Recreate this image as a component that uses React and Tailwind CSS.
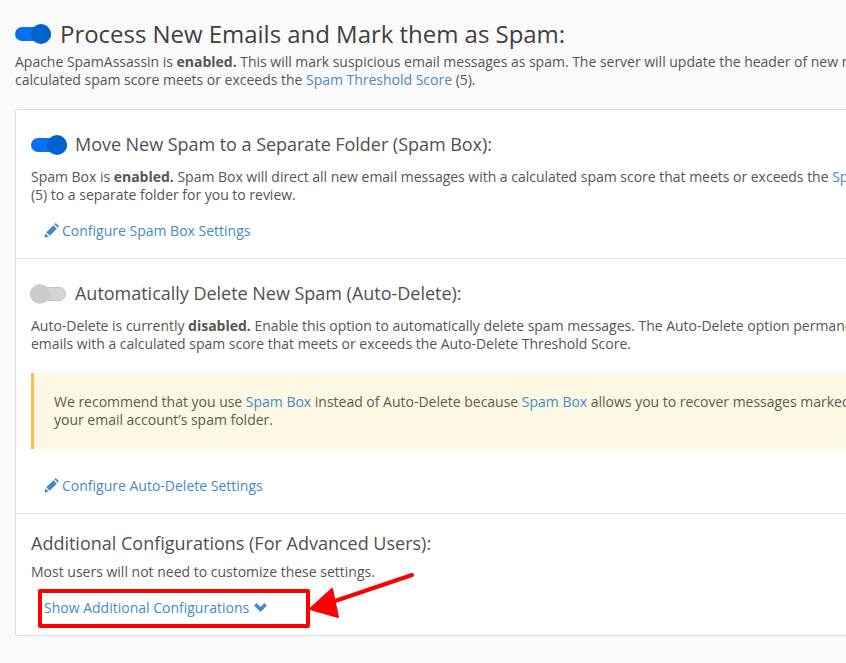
const Toggle = ({ on }) => (
  <span className={`relative inline-block h-[14px] w-[36px] shrink-0 rounded-full ${on ? 'bg-[#0a6ff5]' : '-ml-px mr-px bg-[#d4d4d4] border border-[#c4c4c4]'}`}>
    <span className={`absolute top-1/2 h-[20px] w-[20px] -translate-y-1/2 rounded-full ${on ? 'right-0 bg-[#0062cc]' : '-left-px bg-[#cccccc]'}`} />
  </span>
);

const PencilIcon = () => (
  <svg viewBox="0 0 16 16" className="-mt-[2px] h-[15px] w-[15px] shrink-0 fill-[#428bca]">
    <path d="M0.5 15.5l.9-4.6 3.7 3.7-4.6.9zM2.4 9.9l7.6-7.6 3.7 3.7-7.6 7.6-3.7-3.7zM11 1.3l.7-.7c.4-.4 1-.4 1.4 0l2.3 2.3c.4.4.4 1 0 1.4l-.7.7L11 1.3z" />
  </svg>
);

const ChevronIcon = () => (
  <svg viewBox="0 0 14 11" className="-mt-[3px] h-[10px] w-[13px] shrink-0 fill-[#428bca]">
    <path d="M0.4 3.4L2.2 1.6c.3-.3.7-.3 1 0L7 5.4l3.8-3.8c.3-.3.7-.3 1 0l1.8 1.8c.3.3.3.7 0 1L7.5 10.4c-.3.3-.7.3-1 0L.4 4.4c-.3-.3-.3-.7 0-1z" />
  </svg>
);

const Link = ({ children }) => <a href="#" className="text-[#428bca]">{children}</a>;

const ActionLink = ({ children }) => (
  <a href="#" className="flex h-[20px] items-center gap-[3px] pl-[13px] text-[#428bca]">
    <PencilIcon />
    {children}
  </a>
);

const App = () => {
  return (
    <div className="h-[663px] w-[846px] overflow-hidden bg-[#fafafa] font-['Open_Sans',sans-serif] text-[14px] leading-[18px] text-[#555555]">
      <div className="relative w-[1100px] pl-[15px] pt-[16px]">
        <div className="flex h-[36px] items-center gap-[9px]">
          <Toggle on />
          <h1 className="text-[24px] font-normal leading-[36px] tracking-[-0.03px] text-[#404040]">Process New Emails and Mark them as Spam:</h1>
        </div>
        <p className="mt-[1px] whitespace-nowrap tracking-[-0.015px]">
          Apache SpamAssassin is <b>enabled.</b> This will mark suspicious email messages as spam. The server will update the header of new messages with a
          <br />
          calculated spam score meets or exceeds the <Link>Spam Threshold Score</Link> (5).
        </p>

        <div className="mt-[20px] rounded-[2px] border border-[#e0e0e0] bg-white">
          <section className="h-[149px] border-b border-[#e0e0e0] px-[15px] pt-[21px]">
            <div className="flex h-[27px] items-center gap-[8px]">
              <Toggle on />
              <h2 className="text-[18px] font-normal leading-[27px] tracking-[-0.04px] text-[#505050]">Move New Spam to a Separate Folder (Spam Box):</h2>
            </div>
            <p className="mt-[10px] whitespace-nowrap tracking-[-0.015px]">
              Spam Box is <b>enabled.</b> Spam Box will direct all new email messages with a calculated spam score that meets or exceeds the <Link>Spam Threshold Score</Link>
              <br />
              (5) to a separate folder for you to review.
            </p>
            <div className="mt-[17px]"><ActionLink>Configure Spam Box Settings</ActionLink></div>
          </section>

          <section className="h-[255px] border-b border-[#e0e0e0] px-[15px] pt-[21px]">
            <div className="flex h-[27px] items-center gap-[8px]">
              <Toggle />
              <h2 className="text-[18px] font-normal leading-[27px] tracking-[-0.02px] text-[#505050]">Automatically Delete New Spam (Auto-Delete):</h2>
            </div>
            <p className="mt-[10px] whitespace-nowrap tracking-[-0.015px]">
              Auto-Delete is currently <b>disabled.</b> Enable this option to automatically delete spam messages. The Auto-Delete option permanently removes new
              <br />
              emails with a calculated spam score that meets or exceeds the Auto-Delete Threshold Score.
            </p>
            <div className="mt-[20px] h-[76px] whitespace-nowrap border-l-[3px] border-[#f5be4d] bg-[#fcf8e3] pl-[20px] pt-[20px] tracking-[-0.01px] text-[#5c5c50]">
              We recommend that you use <Link>Spam Box</Link> instead of Auto-Delete because <Link>Spam Box</Link> allows you to recover messages marked as spam from
              <br />
              your email account’s spam folder.
            </div>
            <div className="mt-[27px]"><ActionLink>Configure Auto-Delete Settings</ActionLink></div>
          </section>

          <section className="h-[121px] px-[15px] pt-[16px]">
            <h2 className="text-[18px] font-normal leading-[27px] text-[#505050]">Additional Configurations (For Advanced Users):</h2>
            <p className="mt-[6px]">Most users will not need to customize these settings.</p>
            <a href="#" className="mt-[17px] flex h-[20px] items-center gap-[5px] pl-[13px] text-[#428bca]">
              Show Additional Configurations
              <ChevronIcon />
            </a>
          </section>
        </div>

        {/* red annotation drawn over the screenshot */}
        <div className="pointer-events-none absolute left-[38px] top-[589px] h-[39px] w-[272px] rounded-[2px] border-4 border-[#ff0000]" />
        <svg className="pointer-events-none absolute left-[305px] top-[568px]" width="115" height="60" viewBox="0 0 115 60">
          <line x1="107" y1="7" x2="30" y2="33" stroke="#ff0000" strokeWidth="4" strokeLinecap="round" />
          <polygon points="5,41 27,21 33,49" fill="#ff0000" stroke="#ff0000" strokeWidth="2" strokeLinejoin="round" />
        </svg>
      </div>
    </div>
  );
};

export default App;
